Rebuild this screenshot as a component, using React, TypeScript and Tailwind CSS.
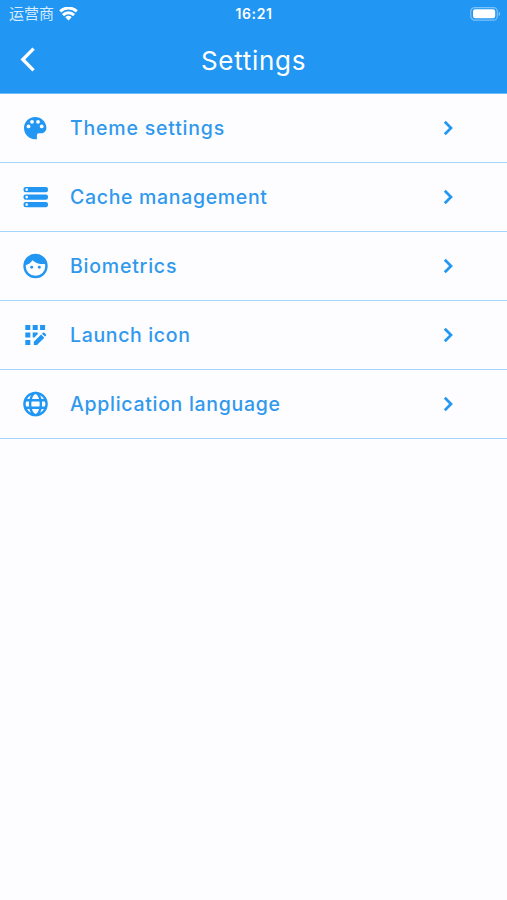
import React from 'react';

type IconProps = { className?: string };

const PaletteIcon = ({ className }: IconProps) => (
  <svg className={className} viewBox="0 0 28 28">
    <path fill="currentColor" d="M14 3C7.800 3 3 8 3 14s4.800 11.200 11 11.200h1.900v-3.900c0-1.200.8-2 2-2h2.100c3 0 5.400-2.300 5.400-5.300C25.400 7.800 20.200 3 14 3z" />
    <g fill="#fdfdff">
      <circle cx="7.500" cy="12.400" r="1.900" />
      <circle cx="11" cy="7.800" r="1.900" />
      <circle cx="17" cy="7.800" r="1.900" />
      <circle cx="20.700" cy="12.400" r="1.900" />
    </g>
  </svg>
);

const StorageIcon = ({ className }: IconProps) => (
  <svg className={className} viewBox="0 0 28 28">
    {[3.9, 11.4, 18.9].map((y) => (
      <g key={y}>
        <rect x="2.500" y={y} width="24.500" height="5.400" rx="2.200" fill="currentColor" />
        <circle cx="5.700" cy={y + 2.7} r="1.300" fill="#fdfdff" />
      </g>
    ))}
  </svg>
);

const FaceIcon = ({ className }: IconProps) => (
  <svg className={className} viewBox="0 0 28 28">
    <circle cx="14.500" cy="14" r="11" fill="none" stroke="currentColor" strokeWidth="2.400" />
    <path fill="currentColor" d="M3 13.500c4-.7 7-2.600 8.500-5.300 3.500 3.300 8 4.300 14 3.700C24.500 6 20 2.700 14.500 2.700S4 6.500 3 13.500z" />
    <circle cx="10.700" cy="15.300" r="1.450" fill="currentColor" />
    <circle cx="18.300" cy="15.300" r="1.450" fill="currentColor" />
  </svg>
);

const RegistrationIcon = ({ className }: IconProps) => (
  <svg className={className} viewBox="0 0 28 28" fill="currentColor">
    <path d="M4.300 3.900h5v5h-5zM11.700 3.900h5v5h-5zM19.100 3.900h5v5h-5zM4.300 11.400h5v5h-5zM4.300 18.900h5v5h-5zM11.700 11.400h5v1.800l-3.300 3.200h-1.700z" />
    <path d="M12.800 20.800l7.300-7.300 3.200 3.200-7.300 7.300h-3.200zM20.900 12.700l1-1q.7-.6 1.400 0l1.600 1.600q.7.700 0 1.400l-.9.900z" />
  </svg>
);

const GlobeIcon = ({ className }: IconProps) => (
  <svg className={className} viewBox="0 0 28 28" fill="none" stroke="currentColor" strokeWidth="2.400">
    <circle cx="14.500" cy="14" r="11.100" />
    <ellipse cx="14.500" cy="14" rx="5.400" ry="11.100" />
    <path d="M4.300 10.300h20.400M4.300 17.700h20.400" />
  </svg>
);

const ChevronIcon = ({ className }: IconProps) => (
  <svg className={className} viewBox="0 0 28 28" fill="none" stroke="currentColor" strokeWidth="2.700">
    <path d="M10.800 7.800l6.200 6.200-6.200 6.200" />
  </svg>
);

const rows = [
  { label: 'Theme settings', Icon: PaletteIcon, spacing: 'tracking-[0.8px]' },
  { label: 'Cache management', Icon: StorageIcon, spacing: 'tracking-[0.67px]' },
  { label: 'Biometrics', Icon: FaceIcon, spacing: 'tracking-[0.78px]' },
  { label: 'Launch icon', Icon: RegistrationIcon, spacing: 'tracking-[0.65px]' },
  { label: 'Application language', Icon: GlobeIcon, spacing: 'tracking-[0.7px]' },
];

export default function App() {
  return (
    <div className="h-[900px] w-[507px] overflow-hidden bg-[#fdfdff] font-['Inter','Noto_Sans_CJK_SC',sans-serif] text-[#2196f3]">
      <header className="h-[94px] border-b border-[#70bcf8] bg-[#2196f3] text-white">
        <div className="grid h-[27px] grid-cols-3 items-center pr-[6px] pl-[9px]">
          <div className="flex items-center gap-[5px] text-[15px] leading-none">
            <span className="text-[#d5ecfe]">运营商</span>
            <svg width="19" height="14" viewBox="0 0 19 14" fill="none" stroke="currentColor" strokeWidth="3">
              <path d="M1.200 4.400a12 12 0 0 1 16.600 0M4 8.100a7.800 7.800 0 0 1 11 0" />
              <path d="M6.300 10.200a4.500 4.500 0 0 1 6.400 0l-3.200 3.300z" fill="currentColor" stroke="none" />
            </svg>
          </div>
          <span className="-ml-[2px] text-center text-[14px] font-semibold tracking-[0.65px]">16:21</span>
          <svg className="justify-self-end" width="31" height="14" viewBox="0 0 31 14">
            <rect x=".8" y=".6" width="26.500" height="12.600" rx="4" fill="none" stroke="#7dc2f8" strokeWidth="1.200" />
            <rect x="3" y="2.300" width="22.200" height="9" rx="2.200" fill="white" />
            <path d="M28.800 4.600q2.400 2.300 0 4.600z" fill="#9bd0fa" />
          </svg>
        </div>
        <div className="grid h-[66px] grid-cols-[60px_1fr_60px] items-center">
          <svg className="mb-[2px] ml-[14px] size-[27px]" viewBox="0 0 27 27" fill="none" stroke="currentColor" strokeWidth="3.300">
            <path d="M19.600 2.600L8.800 13.500l10.800 10.900" />
          </svg>
          <h1 className="text-center text-[26px] leading-[39px] font-normal tracking-[0.7px]">Settings</h1>
        </div>
      </header>
      <main>
        {rows.map(({ label, Icon, spacing }) => (
          <div key={label} className="flex h-[69px] items-center border-b border-[#a4d5fa] pr-[45px] pl-[21px]">
            <Icon className="size-[28px]" />
            <span className={`mt-[2px] ml-[21px] text-[19.500px] font-medium text-[#3099ee] ${spacing}`}>{label}</span>
            <ChevronIcon className="ml-auto size-[28px]" />
          </div>
        ))}
      </main>
    </div>
  );
}
